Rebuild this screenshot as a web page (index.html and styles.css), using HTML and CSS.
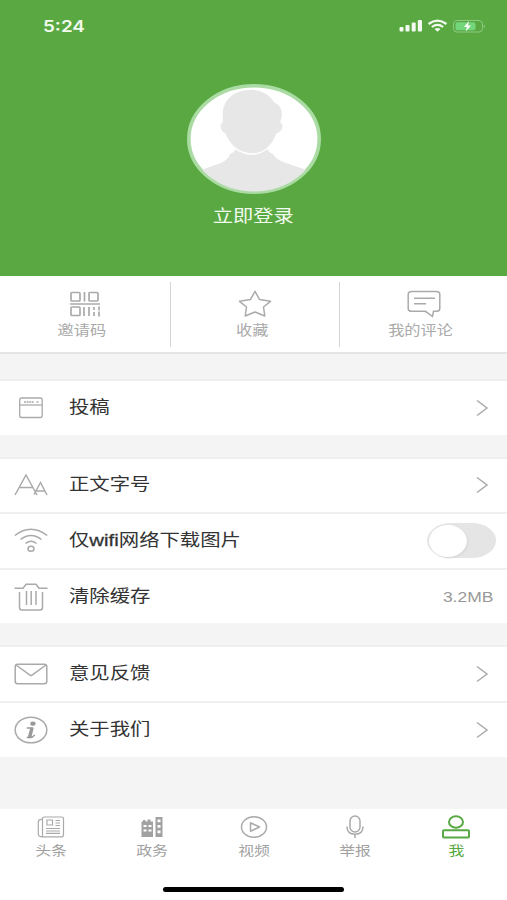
FILE: index.html
```html
<!DOCTYPE html>
<html lang="zh-CN">
<head>
<meta charset="utf-8">
<title>我</title>
<link rel="stylesheet" href="styles.css">
</head>
<body>
<div class="screen">
  <header class="profile">
    <div class="status">
      <span class="time wide">5:24</span>
      <svg class="signals" width="88" height="16" viewBox="0 0 88 16">
        <g fill="#f4fbf2">
          <rect x="0.5" y="9" width="4" height="4.5" rx="1"/><rect x="6.5" y="7" width="4" height="6.5" rx="1"/><rect x="12.7" y="4.5" width="4" height="9" rx="1"/><rect x="18.8" y="2" width="4.2" height="11.5" rx="1"/>
        </g>
        <g fill="none" stroke="#f4fbf2" stroke-width="2.2"><path d="M29.5 6Q38.5-.8 47.5 6M32.8 9Q38.5 4.600 44.200 9"/></g>
        <path d="M35.500 11Q38.500 8.800 41.500 11L38.500 13.700Z" fill="#f4fbf2"/>
        <rect x="54.500" y="2.500" width="29" height="11.500" rx="3.500" fill="none" stroke="#8cc982"/>
        <rect x="56.500" y="4.300" width="20" height="8" rx="2" fill="#74d67a"/>
        <path d="M84.800 6.500Q87.500 8 84.800 10Z" fill="#8cc982"/>
        <path d="M70 3L65 9H68L66.800 13.500L72 7.400H69Z" fill="#fff"/>
      </svg>
    </div>
    <svg class="avatar" width="136" height="112" viewBox="186 83 136 112">
      <defs><clipPath id="face"><ellipse cx="254" cy="139" rx="64" ry="52.500"/></clipPath></defs>
      <ellipse cx="254" cy="139" rx="65.200" ry="53.200" fill="#fff" stroke="#a9dba2" stroke-width="3.600"/>
      <g clip-path="url(#face)" fill="#e7e7e7">
        <path d="M236 148Q235 152 230 154Q228 160 221 163L201 170V196H307V170L286 163Q276 160 273 154Q268 152 267 148Z"/>
        <path d="M251 89C233 89 223 100 222 112L222 122C218 124 220 132 225 134C229 145 239 154 252 154C265 154 273 144 277 134C283 132 285 125 281 122C284 115 283 105 275 102C270 94 261 89 251 89Z" stroke="#fff" stroke-width="1.500"/>
      </g>
    </svg>
    <span class="login wide">立即登录</span>
  </header>

  <nav class="quick">
    <a class="quick-item">
      <svg class="line" width="34" height="28" viewBox="0 0 34 28"><g stroke-width="1.700"><rect x="3" y="2.500" width="9" height="8.500" rx="1"/><rect x="21" y="2.500" width="9" height="8.500" rx="1"/><rect x="3" y="17" width="9" height="8.500" rx="1"/><path d="M16.500 2V11.500M2 14H32M16 17V26M21 17V26M26 17v3m0 2v4M31 16.500v4m0 1v5"/></g></svg>
      <span class="wide">邀请码</span>
    </a>
    <a class="quick-item">
      <svg class="line" width="34" height="28" viewBox="0 0 34 28"><path d="M17 1.300L21.600 9.600L32.500 11.300L25.500 17L26.800 26L17 22L7.200 26L8.500 17L1.500 11.300L12.400 9.600Z" stroke-linejoin="round"/></svg>
      <span class="wide">收藏</span>
    </a>
    <a class="quick-item">
      <svg class="line" width="34" height="28" viewBox="0 0 34 28"><path d="M4.500 1.500H29.500Q32.800 1.500 32.800 4.500V18.500Q32.800 21.300 29.500 21.300H26.500L25.500 26.500L18.500 21.300H4.500Q1.200 21.300 1.200 18.500V4.500Q1.200 1.500 4.500 1.500ZM7 8.300H28M7 13.800H19"/></svg>
      <span class="wide">我的评论</span>
    </a>
  </nav>

  <section class="group">
    <div class="row">
      <svg class="icon line" width="34" height="28" viewBox="0 0 34 28"><g stroke-width="1.300"><rect x="5.700" y="4" width="22.500" height="19.500" rx="2"/><path d="M6 11H28"/><path d="M10 8H20M22.500 8h2" stroke-dasharray="2 .6"/></g></svg>
      <span class="label wide">投稿</span>
      <svg class="arrow line" width="14" height="18" viewBox="0 0 14 18"><path d="M2 1.500L12 9L2 16.500"/></svg>
    </div>
  </section>

  <section class="group">
    <div class="row">
      <svg class="icon line" width="34" height="28" viewBox="0 0 34 28"><path d="M1 24L12 4L23 24M5.500 16.500H19M20 23.500L26.500 11.500L33 24M22 20H31"/></svg>
      <span class="label wide">正文字号</span>
      <svg class="arrow line" width="14" height="18" viewBox="0 0 14 18"><path d="M2 1.500L12 9L2 16.500"/></svg>
    </div>
    <div class="row">
      <svg class="icon line" width="34" height="28" viewBox="0 0 34 28"><path d="M.8 8.500Q17-4 33.200 8.500M6.500 12.500Q17 4.500 27.500 12.500M11.500 16.500Q17 12 22.500 16.500"/><ellipse cx="17" cy="21.800" rx="3" ry="2.500"/></svg>
      <span class="label wide">仅<span class="latin">wifi</span>网络下载图片</span>
      <span class="switch"><span class="knob"></span></span>
    </div>
    <div class="row">
      <svg class="icon line" width="34" height="28" viewBox="0 0 34 28"><path d="M.5 5.200H9L12 1.200H22L25 5.200H33.500M5.500 9V24.500Q5.500 27 8 27H26Q28.500 27 28.500 24.500V9M12.500 8V22M17.200 8V22M22 8V22"/></svg>
      <span class="label wide">清除缓存</span>
      <span class="size wide">3.2MB</span>
    </div>
  </section>

  <section class="group">
    <div class="row">
      <svg class="icon line" width="34" height="28" viewBox="0 0 34 28"><rect x="1.200" y="4.200" width="31.600" height="19.600" rx="2.500"/><path d="M2 5L16 15.200Q17 16 18 15.200L32 5"/></svg>
      <span class="label wide">意见反馈</span>
      <svg class="arrow line" width="14" height="18" viewBox="0 0 14 18"><path d="M2 1.500L12 9L2 16.500"/></svg>
    </div>
    <div class="row">
      <svg class="icon line" width="34" height="28" viewBox="0 0 34 28"><ellipse cx="17" cy="14" rx="15.800" ry="12.800"/><ellipse cx="19" cy="7.700" rx="2.700" ry="2.100" fill="#999" stroke="none"/><path d="M12.800 12H18.500L15.500 21.500Q18 22 20.800 19M12.800 21.500H16" stroke="#999" stroke-width="1.400"/><path d="M18 11.800L15.500 21.500" stroke="#999" stroke-width="3.400"/></svg>
      <span class="label wide">关于我们</span>
      <svg class="arrow line" width="14" height="18" viewBox="0 0 14 18"><path d="M2 1.500L12 9L2 16.500"/></svg>
    </div>
  </section>

  <footer class="tabbar">
    <div class="tabs">
      <a class="tab">
        <svg class="line" width="30" height="26" viewBox="0 0 30 26"><path d="M6.500 22.800H25.500Q27.500 22.800 27.500 20.500V4.500Q27.500 3 25.500 3H8.500Q6.500 3 6.500 5V22.500M6.500 5.500Q2.300 5 2.300 8V20Q2.300 22.800 6.500 22.800M11 6H16.500V11H11ZM19.500 6.500H24M19.500 9H24M19.500 11.500H24M10 14.500H24M10 17H24M10 19.300H24" stroke-width="1.200"/></svg>
        <span class="wide">头条</span>
      </a>
      <a class="tab">
        <svg width="30" height="26" viewBox="0 0 30 26"><path d="M4.500 7.500H6V6H8.500V7.500H10.500V5.500H13.500V7.500H16V23H4.500ZM18.500 3H25.500V23H18.500Z" fill="#a1a1a1"/><path d="M6.500 11h3v2h-3zM11.500 11h3v2h-3zM6.500 15.500h3v2h-3zM11.500 15.500h3v2h-3zM20.500 5.500h3v2.800h-3zM20.500 11h3v2.800h-3zM20.500 16.500h3v2.800h-3z" fill="#fff"/></svg>
        <span class="wide">政务</span>
      </a>
      <a class="tab">
        <svg class="line" width="30" height="26" viewBox="0 0 30 26"><ellipse cx="15" cy="13" rx="12.500" ry="10.300"/><path d="M11.500 8.800L20.500 13L11.500 17.200Z" stroke-linejoin="round"/></svg>
        <span class="wide">视频</span>
      </a>
      <a class="tab">
        <svg class="line" width="30" height="26" viewBox="0 0 30 26"><rect x="10" y="2" width="10" height="16" rx="5"/><path d="M7 12.500Q7 20.200 15 20.200Q23 20.200 23 12.500M15 20V24"/></svg>
        <span class="wide">举报</span>
      </a>
      <a class="tab active">
        <svg width="30" height="26" viewBox="0 0 30 26" fill="none" stroke="#57a843" stroke-width="2"><ellipse cx="15" cy="8" rx="7" ry="5.800"/><rect x="2" y="16.300" width="26" height="7.200" rx="1"/></svg>
        <span class="wide">我</span>
      </a>
    </div>
    <div class="home"></div>
  </footer>
</div>
</body>
</html>
```
FILE: styles.css
```css
* {
  box-sizing: border-box;
}

body {
  margin: 0;
  background: #f4f4f4;
  font-family: "Liberation Sans", "Noto Sans CJK SC", sans-serif;
}

.screen {
  display: flex;
  flex-direction: column;
  width: 507px;
  height: 900px;
}

svg {
  display: block;
  flex: none;
}

.line {
  fill: none;
  stroke: #aaa;
  stroke-width: 1.5;
}

.wide {
  display: block;
  white-space: nowrap;
  transform: scaleX(1.22);
}

.profile {
  display: flex;
  flex-direction: column;
  align-items: center;
  height: 276px;
  background: #5aa842;
  color: #f1faee;
}

.status {
  display: flex;
  justify-content: space-between;
  align-items: center;
  width: 100%;
  height: 52px;
  padding: 0 20px 0 43px;
}

.time {
  font: 600 16px/20px Inter, sans-serif;
  transform: scaleX(1.18);
  transform-origin: left;
}

.avatar {
  margin-top: 31px;
}

.login {
  margin-top: 10px;
  font-size: 16.6px;
  line-height: 24px;
}

.quick {
  display: flex;
  height: 78px;
  padding-top: 6px;
  border-bottom: 2px solid #e5e5e5;
  background: #fff;
}

.quick-item {
  display: flex;
  flex: none;
  flex-direction: column;
  align-items: center;
  width: 169px;
  height: 65px;
  padding-top: 8px;
  color: #aaa;
  font-size: 13.3px;
  line-height: 20px;
}

.quick-item:first-child {
  width: 170px;
}

.quick-item + .quick-item {
  border-left: 1px solid #d5d5d5;
}

.quick-item .wide {
  margin: 3px 6px 0 0;
}

.group {
  margin-top: 22px;
  background: #fff;
}

.quick + .group {
  margin-top: 25px;
}

.row {
  display: flex;
  align-items: center;
  height: 55.6px;
  padding: 0 11px 0 14px;
  border-top: 2px solid #efefef;
}

.label {
  margin-left: 21px;
  color: #333;
  font-size: 16.7px;
  line-height: 24px;
  transform-origin: left;
}

.latin {
  -webkit-text-stroke: 0.3px #333;
}

.arrow {
  margin: 0 7px 0 auto;
}

.switch {
  width: 69px;
  height: 35px;
  margin-left: auto;
  padding: 1.5px;
  border-radius: 24px / 17.5px;
  background: #e5e5e5;
}

.knob {
  display: block;
  width: 38px;
  height: 32px;
  border-radius: 50%;
  background: #fff;
  box-shadow: 1px 1px 2px #d5d5d5;
}

.size {
  margin: 0 3px 0 auto;
  color: #999;
  font-size: 14px;
  line-height: 18px;
  transform: scaleX(1.25);
  transform-origin: right;
}

.tabbar {
  height: 91px;
  margin-top: auto;
  padding-top: 5px;
  background: #fff;
}

.tabs {
  display: flex;
}

.tab {
  display: flex;
  flex: 1;
  flex-direction: column;
  align-items: center;
  height: 73px;
  color: #a1a1a1;
  font-size: 13px;
  line-height: 20px;
}

.tab .wide {
  margin-top: 1px;
}

.tab.active {
  color: #57a843;
}

.home {
  width: 181px;
  height: 5px;
  margin: 0 auto;
  border-radius: 3px;
  background: #000;
}
```
